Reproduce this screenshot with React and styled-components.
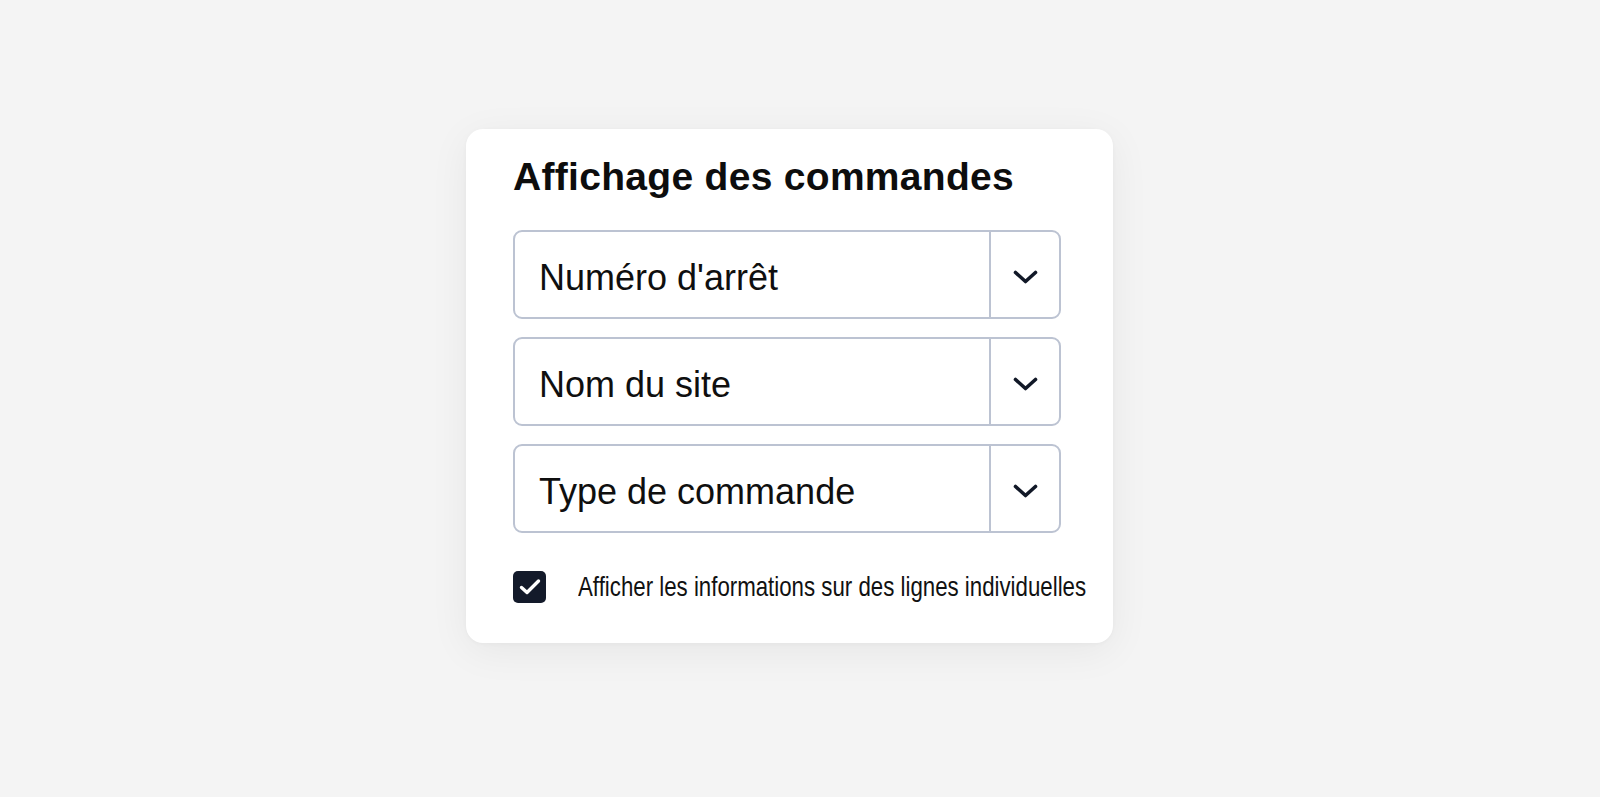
import styled, { createGlobalStyle } from "styled-components";

const GlobalStyle = createGlobalStyle`
  html, body {
    margin: 0;
    padding: 0;
    background: #f4f4f4;
    font-family: "Liberation Sans", Arial, sans-serif;
  }
`;

const fields = ["Numéro d'arrêt", "Nom du site", "Type de commande"];

const App = () => {
  return (
    <Page>
      <GlobalStyle />
      <Card>
        <Title>Affichage des commandes</Title>
        <SelectList>
          {fields.map((label) => (
            <Select key={label}>
              <SelectValue>{label}</SelectValue>
              <SelectButton>
                <svg width="25" height="15" viewBox="0 0 25 15" fill="none">
                  <path
                    d="M2.5 2.5L12.5 11.5L22.5 2.5"
                    stroke="#111827"
                    strokeWidth="3.6"
                    strokeLinecap="round"
                    strokeLinejoin="round"
                  />
                </svg>
              </SelectButton>
            </Select>
          ))}
        </SelectList>
        <CheckRow>
          <CheckBox>
            <svg width="24" height="20" viewBox="0 0 24 20" fill="none">
              <path
                d="M3.5 10.5L9 15.5L20.5 4"
                stroke="white"
                strokeWidth="3.4"
                strokeLinecap="round"
                strokeLinejoin="round"
              />
            </svg>
          </CheckBox>
          <CheckLabel>
            Afficher les informations sur des lignes individuelles
          </CheckLabel>
        </CheckRow>
      </Card>
    </Page>
  );
};

const Page = styled.div`
  min-height: 797px;
  box-sizing: border-box;
  padding: 129px 0 0 466px;
`;

const Card = styled.div`
  width: 647px;
  height: 514px;
  box-sizing: border-box;
  padding: 25px 52px 0 47px;
  background: #ffffff;
  border-radius: 17px;
  box-shadow: 0 8px 40px rgba(0, 0, 0, 0.06), 0 1px 4px rgba(0, 0, 0, 0.03);
`;

const Title = styled.h2`
  margin: 0;
  font-size: 39px;
  line-height: 46px;
  font-weight: 700;
  color: #0d0d0d;
  letter-spacing: 0.3px;
`;

const SelectList = styled.div`
  display: flex;
  flex-direction: column;
  gap: 18px;
  margin-top: 30px;
`;

const Select = styled.div`
  display: flex;
  height: 89px;
  box-sizing: border-box;
  border: 2px solid #bcc3d2;
  border-radius: 9px;
  background: #fff;
`;

const SelectValue = styled.div`
  flex: 1;
  display: flex;
  align-items: center;
  padding: 6px 0 0 24px;
  font-size: 36px;
  color: #0f0f0f;
`;

const SelectButton = styled.div`
  width: 70px;
  border-left: 2px solid #bcc3d2;
  display: flex;
  align-items: center;
  justify-content: center;
  padding-top: 5px;
  box-sizing: border-box;
`;

const CheckRow = styled.div`
  display: flex;
  align-items: center;
  gap: 32px;
  margin-top: 38px;
  white-space: nowrap;
`;

const CheckBox = styled.div`
  width: 33px;
  height: 32px;
  flex: none;
  border-radius: 5px;
  background: #131a2a;
  display: flex;
  align-items: center;
  justify-content: center;
`;

const CheckLabel = styled.span`
  display: inline-block;
  font-size: 28px;
  color: #111;
  transform: scaleX(0.795);
  transform-origin: left center;
`;

export default App;
